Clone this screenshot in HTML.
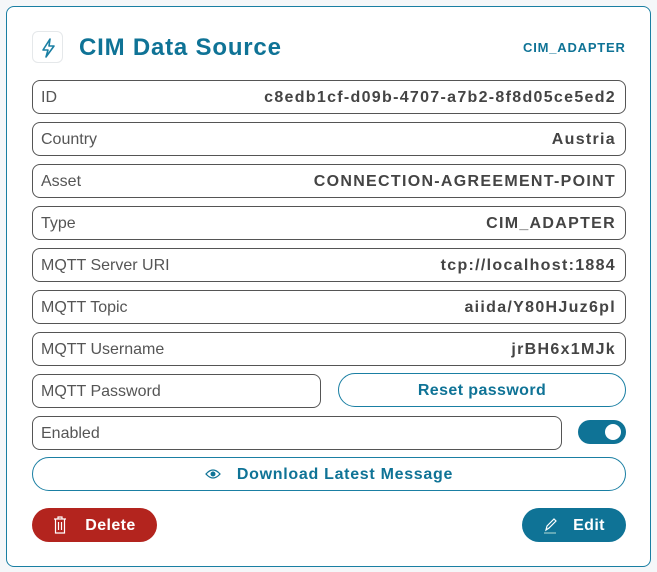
<!DOCTYPE html>
<html><head><style>
*{box-sizing:border-box;margin:0;padding:0}
body{width:657px;height:572px;background:#f5f7f9;font-family:"Liberation Sans",sans-serif;position:relative;overflow:hidden}
.card{position:absolute;left:6px;top:6px;width:645px;height:561px;border:1.5px solid #1a7fa3;border-radius:8px;background:#fff}
.a{position:absolute}
.row{position:absolute;left:32px;width:594px;height:34px;border:1px solid #555;border-radius:8px;display:flex;align-items:center;justify-content:space-between;padding:2px 9px 0 8px;font-size:16px;color:#555;line-height:1}
.row b{color:#444;font-size:16px;letter-spacing:1.3px}
.btn{position:absolute;border:1.3px solid #1a7fa3;border-radius:17px;display:flex;align-items:center;justify-content:center;color:#0f7396;font-weight:bold;font-size:16px;line-height:1;padding-top:2px}
</style></head><body>
<div class="card"></div>
<div class="a" style="left:32px;top:31px;width:31px;height:32px;border:1px solid #e5e8ea;border-radius:6px"><svg width="31" height="32" viewBox="0 0 31 32"><path d="M17 7 L10 18 H15 L13 25 L21 14 H16 Z" fill="none" stroke="#1a7fa3" stroke-width="1.6" stroke-linejoin="round"/></svg></div>
<div class="a" style="left:79px;top:34px;font-size:24px;font-weight:bold;color:#0f7396;letter-spacing:0.8px">CIM Data Source</div>
<div class="a" style="left:523px;top:40px;font-size:13px;font-weight:bold;color:#0f7396;letter-spacing:0.8px">CIM_ADAPTER</div>
<div class="row" style="top:80px">ID<b>c8edb1cf-d09b-4707-a7b2-8f8d05ce5ed2</b></div>
<div class="row" style="top:122px">Country<b>Austria</b></div>
<div class="row" style="top:164px">Asset<b>CONNECTION-AGREEMENT-POINT</b></div>
<div class="row" style="top:206px">Type<b>CIM_ADAPTER</b></div>
<div class="row" style="top:248px">MQTT Server URI<b>tcp://localhost:1884</b></div>
<div class="row" style="top:290px">MQTT Topic<b>aiida/Y80HJuz6pl</b></div>
<div class="row" style="top:332px">MQTT Username<b>jrBH6x1MJk</b></div>
<div class="row" style="top:374px;width:289px">MQTT Password</div>
<div class="btn" style="left:338px;top:373px;width:288px;height:34px;letter-spacing:0.4px">Reset password</div>
<div class="row" style="top:416px;width:530px">Enabled</div>
<div class="a" style="left:578px;top:420px;width:48px;height:24px;border-radius:12px;background:#0f7396"><div class="a" style="left:27px;top:4px;width:16px;height:16px;border-radius:50%;background:#fff"></div></div>
<div class="btn" style="left:32px;top:457px;width:594px;height:34px;letter-spacing:0.7px"><svg width="16" height="12" viewBox="0 0 16 12" style="margin-right:16px;margin-top:-2px"><path d="M1 6 Q8 -2 15 6 Q8 14 1 6Z" fill="none" stroke="#0f7396" stroke-width="1.3"/><circle cx="8" cy="6" r="2.5" fill="#0f7396"/></svg>Download Latest Message</div>
<div class="btn" style="left:32px;top:508px;width:125px;height:34px;background:#b3241e;border:none;color:#fff;letter-spacing:0.4px"><svg width="14" height="18" viewBox="0 0 14 18" style="margin-right:18px;margin-top:-2px"><path d="M1 3H13M5 3V1H9V3M2.5 3V17H11.5V3M5.5 6V14M8.5 6V14" fill="none" stroke="#fff" stroke-width="1.2"/></svg>Delete</div>
<div class="btn" style="left:522px;top:508px;width:104px;height:34px;background:#0f7396;border:none;color:#fff;letter-spacing:0.4px"><svg width="16" height="18" viewBox="0 0 16 18" style="margin-right:14px;margin-top:-2px"><path d="M3 14L4 10L11 3L13 5L6 12Z" fill="none" stroke="#fff" stroke-width="1.2"/><path d="M1 17H13" stroke="#9cc" stroke-width="1.2"/></svg>Edit</div>
</body></html>
